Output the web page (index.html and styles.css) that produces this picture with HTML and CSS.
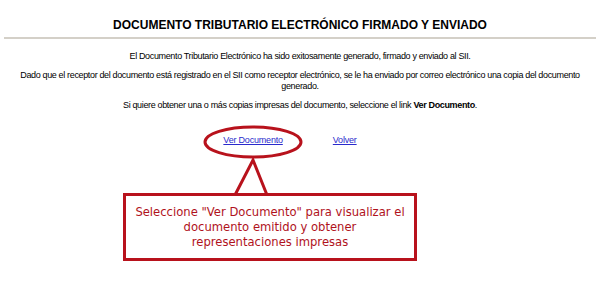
FILE: index.html
```html
<!DOCTYPE html>
<html lang="es">
<head>
    <meta charset="UTF-8">
    <title>Documento Tributario Electrónico</title>
    <link rel="stylesheet" href="styles.css">
</head>
<body>
    <h1 class="title">DOCUMENTO TRIBUTARIO ELECTRÓNICO FIRMADO Y ENVIADO</h1>
    <div class="rule"></div>

    <p class="msg first">El Documento Tributario Electrónico ha sido exitosamente generado, firmado y enviado al SII.</p>
    <p class="msg">Dado que el receptor del documento está registrado en el SII como receptor electrónico, se le ha enviado por correo electrónico una copia del documento generado.</p>
    <p class="msg">Si quiere obtener una o más copias impresas del documento, seleccione el link <b>Ver Documento</b>.</p>

    <div class="links">
        <a href="#" class="link link-ver">Ver Documento</a>
        <a href="#" class="link">Volver</a>
        <svg class="mark" width="110" height="80" viewBox="0 0 110 80">
            <ellipse cx="50" cy="17" rx="48" ry="15" fill="none" stroke="#b8121c" stroke-width="3"/>
            <polyline points="32,70 50,35 64,70" fill="#fff" stroke="#b8121c" stroke-width="3" stroke-linejoin="miter"/>
        </svg>
    </div>

    <div class="callout">
        Seleccione "Ver Documento" para visualizar el<br>
        documento emitido y obtener<br>
        representaciones impresas
    </div>
</body>
</html>
```

FILE: styles.css
```css
body { margin: 0; background: #fff; font-family: "Liberation Sans", Arial, sans-serif; color: #000; }
.title { margin: 0; padding-top: 18px; font-size: 12px; text-align: center; }
.rule { height: 2px; margin: 5px 4px 0; background: #d4d0c8; }
.msg { margin: 8px 8px 0; font-size: 9px; line-height: 11px; letter-spacing: -0.35px; text-align: center; }
.msg.first { margin-top: 12px; }
.links { position: relative; display: flex; justify-content: center; gap: 50px; margin-top: 24px; padding-right: 20px; font-size: 9px; letter-spacing: -0.2px; }
.link { color: #2a2acc; position: relative; z-index: 1; }
.mark { position: absolute; left: 203px; top: -10px; }
.callout { position: relative; width: 272px; margin: 48px 0 0 123px; padding: 9px 8px 8px; border: 3px solid #b8121c; color: #b0121c; font-family: "DejaVu Sans", Verdana, sans-serif; font-size: 11.6px; line-height: 15px; text-align: center; }
```
